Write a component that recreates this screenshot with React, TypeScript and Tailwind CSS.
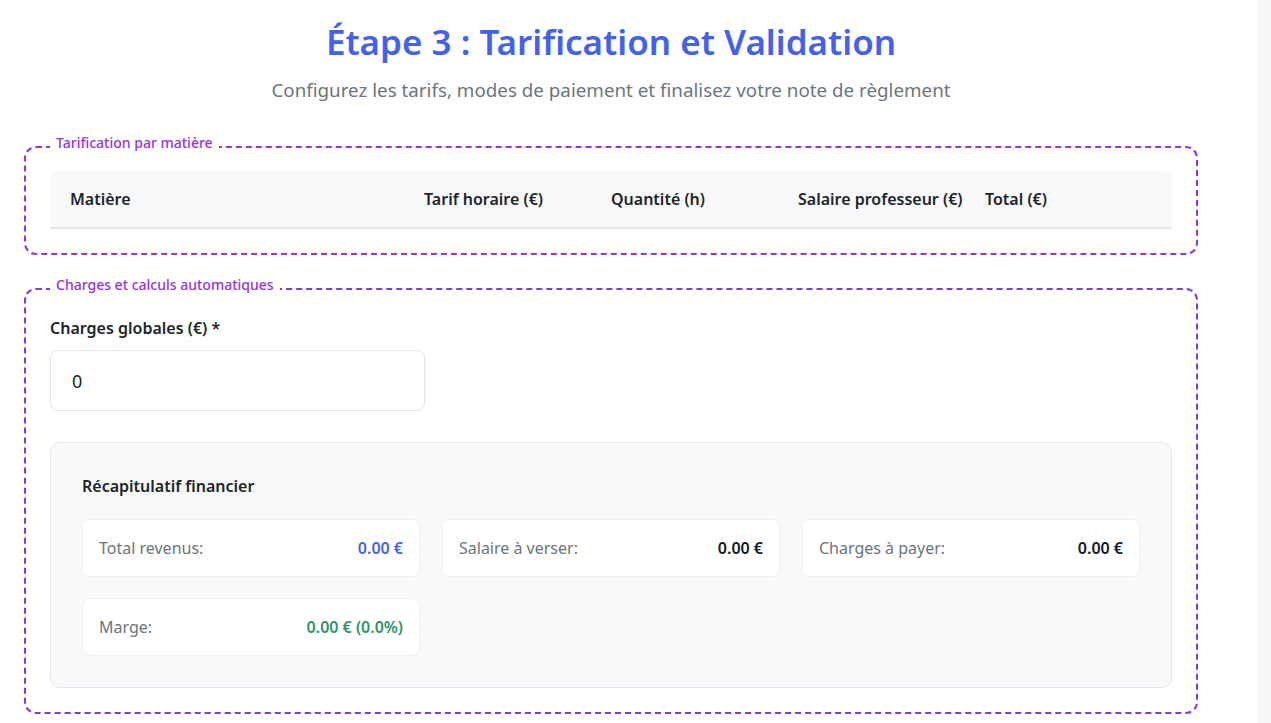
import React from "react";

const cards = [
  { label: "Total revenus:", value: "0.00 €", color: "text-[#4361ee]" },
  { label: "Salaire à verser:", value: "0.00 €", color: "text-[#111827]" },
  { label: "Charges à payer:", value: "0.00 €", color: "text-[#111827]" },
  { label: "Marge:", value: "0.00 € (0.0%)", color: "text-[#2f9467]" },
];

export default function App() {
  return (
    <div
      className="flex min-h-[723px] w-full bg-white"
      style={{ fontFamily: '"Noto Sans", "Open Sans", sans-serif' }}
    >
      <div className="flex-1">
        <div className="w-[1222px] px-6 pt-[21px] pb-2">
          <h1 className="text-center text-[35px] font-semibold leading-[42px] text-[#4361ee]">
            Étape 3 : Tarification et Validation
          </h1>
          <p className="mt-[13px] text-center text-[18.8px] leading-[28px] text-[#6c757d]">
            Configurez les tarifs, modes de paiement et finalisez votre note de règlement
          </p>

          <fieldset className="mt-[29px] rounded-xl border-2 border-dashed border-[#9333ea] px-6 pt-[10px] pb-6">
            <legend className="px-1.5 pb-2 text-[14px] font-medium leading-5 text-[#9333ea]">
              Tarification par matière
            </legend>
            <div className="grid grid-cols-[354px_187px_187px_187px_1fr] rounded-t-lg border-b-2 border-[#e5e7eb] bg-[#f8f9fa] text-[16px] font-semibold text-[#212529]">
              <div className="px-5 py-[16px] leading-6">Matière</div>
              <div className="px-5 py-[16px] leading-6">Tarif horaire (€)</div>
              <div className="px-5 py-[16px] leading-6">Quantité (h)</div>
              <div className="px-5 py-[16px] leading-6 whitespace-nowrap">Salaire professeur (€)</div>
              <div className="px-5 py-[16px] leading-6">Total (€)</div>
            </div>
          </fieldset>

          <fieldset className="mt-[20px] rounded-xl border-2 border-dashed border-[#7c3aed] px-6 pt-[13px] pb-6">
            <legend className="px-1.5 pb-2 text-[14px] font-medium leading-5 text-[#9333ea]">
              Charges et calculs automatiques
            </legend>
            <label className="mb-2.5 block text-[16px] font-semibold leading-6 text-[#212529]">
              Charges globales (€) *
            </label>
            <input
              type="text"
              defaultValue="0"
              className="h-[61px] w-[375px] rounded-lg border border-[#e2e5e9] bg-white px-[21px] text-[18px] text-[#212529] outline-none"
            />

            <div className="mt-[31px] rounded-[10px] border border-[#e5e7eb] bg-[#f8f9fa] p-[31px]">
              <h3 className="mb-[21px] text-[16px] font-semibold leading-6 text-[#212529]">
                Récapitulatif financier
              </h3>
              <div className="grid grid-cols-3 gap-x-[22px] gap-y-[21px]">
                {cards.map((c) => (
                  <div
                    key={c.label}
                    className="flex h-[58px] items-center justify-between rounded-lg border border-[#f0f1f3] bg-white px-4"
                  >
                    <span className="text-[16px] text-[#6c757d]">{c.label}</span>
                    <span className={`text-[16px] font-semibold ${c.color}`}>{c.value}</span>
                  </div>
                ))}
              </div>
            </div>
          </fieldset>
        </div>
      </div>
      <div className="w-[13px] shrink-0 border-l border-[#f0f0f0] bg-[#f8f8f8]" />
    </div>
  );
}
